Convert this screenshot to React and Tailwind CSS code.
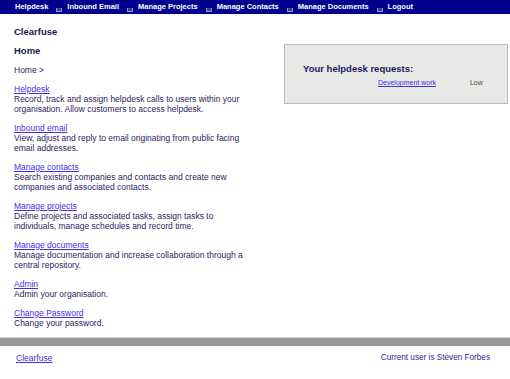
const NAV = ["Helpdesk", "Inbound Email", "Manage Projects", "Manage Contacts", "Manage Documents", "Logout"];

const SECTIONS = [
  { title: "Helpdesk", lines: ["Record, track and assign helpdesk calls to users within your", "organisation. Allow customers to access helpdesk."] },
  { title: "Inbound email", lines: ["View, adjust and reply to email originating from public facing", "email addresses."] },
  { title: "Manage contacts", lines: ["Search existing companies and contacts and create new", "companies and associated contacts."] },
  { title: "Manage projects", lines: ["Define projects and associated tasks, assign tasks to", "individuals, manage schedules and record time."] },
  { title: "Manage documents", lines: ["Manage documentation and increase collaboration through a", "central repository."] },
  { title: "Admin", lines: ["Admin your organisation."] },
  { title: "Change Password", lines: ["Change your password."] },
];

function NavIcon() {
  return (
    <span className="inline-block w-[6px] h-[4px] mt-[6px] ml-[8px] mr-[5px] border border-t-0 border-[#9a9ab8] bg-[#3a3aa0]" />
  );
}

export default function App() {
  return (
    <div className="w-[510px] h-[379px] bg-white text-[8.5px] leading-[10px] text-[#2e1c62]" style={{ fontFamily: '"Liberation Sans", Arial, sans-serif' }}>

      {/* Top nav */}
      <div className="h-[14px] bg-[#00008f] flex items-center pl-[15px] text-white font-bold text-[7.5px]">
        {NAV.map((item, i) => (
          <div key={item} className="flex items-center">
            <span>{item}</span>
            {i < NAV.length - 1 && <NavIcon />}
          </div>
        ))}
      </div>

      <div className="flex">
        {/* Left */}
        <div className="w-[284px] pl-[14px]">
          <h1 className="mt-[12px] text-[9.5px] leading-[12px] font-bold text-[#1a1a5a]">Clearfuse</h1>
          <h2 className="mt-[7px] text-[9.5px] leading-[12px] font-bold text-[#1a1a5a]">Home</h2>
          <p className="mt-[8px]">Home &gt;</p>

          <div className="mt-[9px] flex flex-col gap-[9px]">
            {SECTIONS.map((s) => (
              <div key={s.title}>
                <a className="underline text-[#3f2fe8] cursor-pointer">{s.title}</a>
                {s.lines.map((l) => (
                  <p key={l}>{l}</p>
                ))}
              </div>
            ))}
          </div>
        </div>

        {/* Right */}
        <div className="pt-[30px]">
          <div className="w-[224px] h-[60px] bg-[#e8e9e6] border border-[#bdbdbd] pl-[18px] pt-[18px]">
            <p className="font-bold text-[9.5px] leading-[12px] text-[#1a1a5a]">Your helpdesk requests:</p>
            <div className="flex text-[7px] leading-[10px] mt-[3px]">
              <a className="ml-[75px] underline text-[#3f2fe8]">Development work</a>
              <span className="ml-[34px] text-[#444]">Low</span>
            </div>
          </div>
        </div>
      </div>

      {/* Footer bar */}
      <div className="mt-[9px] h-[9px] bg-[#9a9a9a] border-t border-[#d4d4d4]" />
      <div className="flex justify-between px-[16px] pt-[7px]">
        <a className="underline text-[#3f2fe8]">Clearfuse</a>
        <span className="text-[#3b2385] mr-[4px] text-[8.2px]">Current user is Steven Forbes</span>
      </div>
    </div>
  );
}
